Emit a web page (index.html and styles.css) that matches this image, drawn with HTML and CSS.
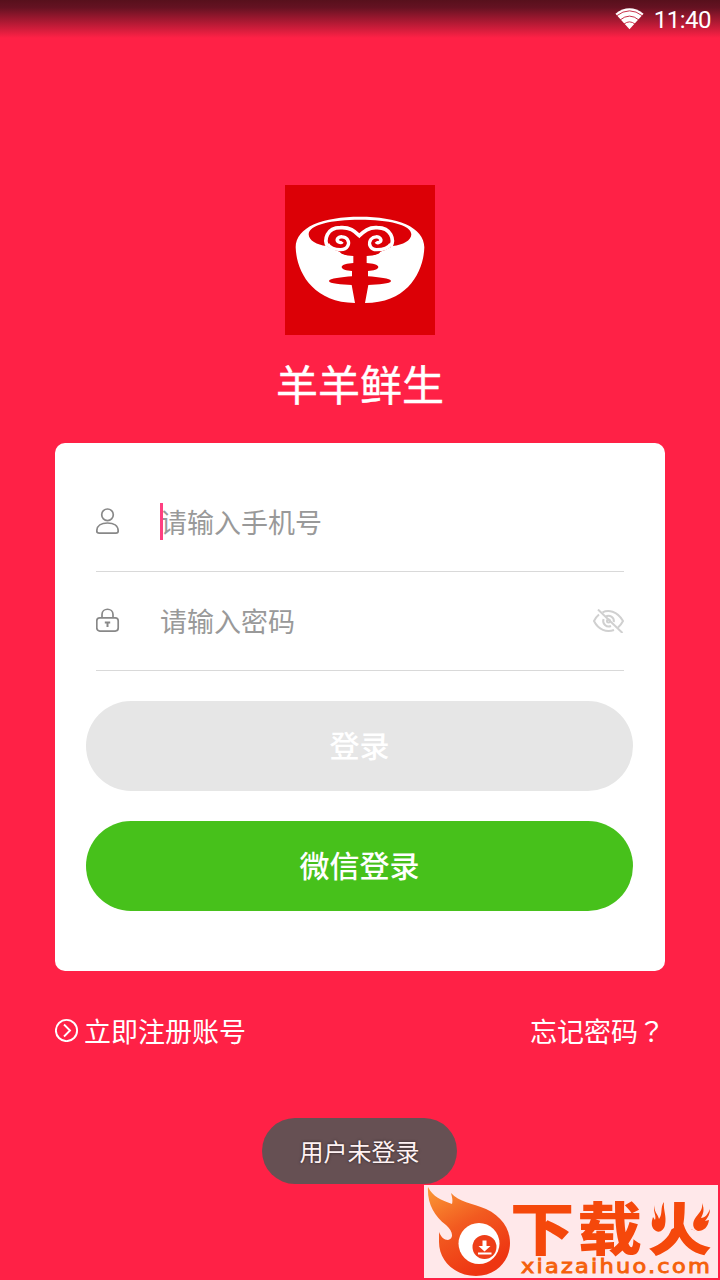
FILE: index.html
```html
<!DOCTYPE html>
<html lang="zh-CN">
<head>
  <meta charset="UTF-8">
  <title>羊羊鲜生</title>
  <link rel="stylesheet" href="styles.css">
</head>
<body>
  <div class="status-bar">
    <svg class="wifi" viewBox="42 18 90 72">
      <path d="M87 88 L43 39 Q87 5 131 39 Z" fill="#fff"/>
      <path d="M46 46 Q87 14 128 46 M57 59 Q87 34 117 59 M69 72 Q87 57 105 72" fill="none" stroke="#c11a35" stroke-width="2.8"/>
    </svg>
    <span>11:40</span>
  </div>

  <svg class="logo" viewBox="15 15 450 450">
    <rect x="15" y="15" width="450" height="450" fill="#dc0006"/>
    <path d="M47 202 C47 140 130 110 240 110 C350 110 433 140 433 202 C431 272 386 369 255 369 L265 315 C295 314 333 311 333 303 C333 296 294 291 264 289 L264 273 C281 272 295 268 295 261 C295 254 278 250 260 249 L260 228 C276 227 298 224 301 215 L318 209 L338 198 C369 195 394 182 394 163 C394 134 325 119 240 119 C155 119 86 134 86 163 C86 182 111 195 139 198 L162 209 L179 215 C184 224 203 227 220 228 L220 249 C202 250 185 254 185 261 C185 268 199 272 216 273 L216 289 C186 291 147 296 147 303 C147 311 185 314 215 315 L225 369 C95 367 49 272 47 202 Z" fill="#fff"/>
    <path d="M143 200 C131 180 140 143 181 143 C211 141 224 154 238 167 C252 154 266 141 292 143 C334 143 344 180 332 200" fill="none" stroke="#fff" stroke-width="11"/>
    <path d="M187 185 C182 192 168 184 172 177 C178 168 194 168 202 178 C211 191 202 209 182 209 C164 209 148 202 143 192 M288 185 C293 192 307 184 302 177 C296 168 281 168 273 178 C263 191 271 209 290 209 C310 209 327 202 332 192" fill="none" stroke="#fff" stroke-width="10"/>
  </svg>
  <h1>羊羊鲜生</h1>

  <form class="card">
    <div class="field">
      <svg class="icon" viewBox="0 0 24 28" fill="none" stroke="#888" stroke-width="1.7">
        <circle cx="11.500" cy="6.800" r="5.800"/>
        <path d="M3.300 25.200 Q0.800 25.200 0.800 23 C0.800 17.700 5.500 15 11.500 15 C17.500 15 22.200 17.700 22.200 23 Q22.200 25.200 19.900 25.200 Z"/>
      </svg>
      <div class="input-wrap">
        <input type="tel" placeholder="请输入手机号">
        <span class="caret"></span>
      </div>
    </div>
    <div class="field">
      <svg class="icon" viewBox="0 0 24 28" fill="none" stroke="#888" stroke-width="1.7">
        <rect x="0.800" y="10.800" width="21.400" height="13.300" rx="3"/>
        <path d="M6 10.800 V7.500 C6 0.500 17 0.500 17 7.500 V10.800"/>
        <path d="M8.800 15.500 H14.200 M11.500 15 V20" stroke-width="2"/>
      </svg>
      <div class="input-wrap">
        <input type="password" placeholder="请输入密码">
      </div>
      <svg class="eye" viewBox="0 0 32 24" fill="none" stroke="#d0d0d0" stroke-width="2">
        <path d="M10.500 3.300 C16 0.700 25 1.500 31 12 Q29 16 26 18.500 M7 5.500 Q4 8 2 12 C6.500 21 14.500 23.500 22 21"/>
        <path d="M13.500 7.800 C17.500 5 22.500 8.500 21.800 13 M11.500 10 C10 14.500 14.500 19 19 17"/>
        <circle cx="16.500" cy="12" r="1.500"/>
        <path d="M6 0.500 L30.500 24"/>
      </svg>
    </div>
    <button class="btn" type="submit" disabled>登录</button>
    <button class="btn wechat" type="button">微信登录</button>
  </form>

  <div class="links">
    <a href="#">
      <svg class="arrow" viewBox="0 0 24 24" fill="none" stroke="#fff" stroke-width="1.900">
        <circle cx="11.500" cy="12.500" r="10.600"/>
        <path d="M9 6.500 L15 12.500 L9 18.500"/>
      </svg>
      立即注册账号
    </a>
    <a href="#">忘记密码<span class="mark-end">？</span></a>
  </div>

  <div class="toast">用户未登录</div>

  <svg class="watermark" viewBox="0 0 294 93">
    <defs>
      <linearGradient id="fire" x1="0" y1="0" x2="0.500" y2="1">
        <stop offset="0" stop-color="#fb9a35"/>
        <stop offset="0.500" stop-color="#f25a20"/>
        <stop offset="1" stop-color="#ee3512"/>
      </linearGradient>
    </defs>
    <rect width="294" height="93" fill="#ffe8ea"/>
    <path d="M4 2 C9 12 17 15 28 19 C29 15 28 12 27 8 C35 17 48 18 62 24 C77 31 86 43 86 58 C86 77 71 91 52 91 C31 91 15 76 15 57 L15 47 C17 52 20 55 24 55 C31 53 28 45 22 40 C10 31 3 18 4 2 Z" fill="url(#fire)"/>
    <circle cx="55" cy="58.500" r="20.500" fill="#fff"/>
    <circle cx="60.500" cy="62" r="12" fill="#ee3e18"/>
    <path d="M58.500 55.500 H62.500 V61 H66.500 L60.500 66.500 L54.500 61 H58.500 Z M54 67.500 H67.500 V69.500 H54 Z" fill="#fff"/>
    <text class="mark" transform="translate(86 65) scale(1.130 1)">下</text>
    <text class="mark" transform="translate(153.500 65) scale(1.130 1)">载</text>
    <text class="mark" transform="translate(223.500 65) scale(1.130 1)">火</text>
    <!-- flames in place of the two dots of the last character -->
    <path d="M224 15 H250 V43 L240 48 H224 Z M265 15 H291 V48 H275 L265 43 Z" fill="#ffe8ea"/>
    <path d="M231 20 C229 26 234 29 235 34 C239 29 236 22 240 17 C239 25 243 31 241 40 C240 45 236 48 232 46 C227 43 227 38 229 32 L231 35 C233 30 228 26 231 20 Z M278 18 C281 25 279 29 277 33 C281 33 284 29 286 24 C286 29 284 32 281 36 L285 35 C284 42 280 46 274 46 C268 44 268 37 272 32 C276 27 279 24 278 18 Z" fill="#f5480b"/>
    <text class="domain" x="97" y="88" textLength="191" lengthAdjust="spacingAndGlyphs">xiazaihuo.com</text>
  </svg>
</body>
</html>
```
FILE: styles.css
```css
* {
  box-sizing: border-box;
}
body {
  margin: 0;
  height: 1280px;
  position: relative;
  overflow: hidden;
  background-color: #ff2146;
  font-family: "Noto Sans CJK SC", sans-serif;
  color: #fff;
}
.status-bar {
  height: 38px;
  padding: 1px 9px 0 0;
  display: flex;
  justify-content: flex-end;
  align-items: center;
  background: linear-gradient(#57101c, #651222 20%, #ff2146);
  font-family: Roboto, sans-serif;
  font-size: 24px;
  letter-spacing: -0.5px;
}
.wifi {
  width: 29px;
  height: 23px;
  margin: 0 10px 2px 0;
}
.logo {
  display: block;
  width: 150px;
  height: 150px;
  margin: 147px auto 0;
}
h1 {
  margin: 18px 0 30px;
  font-size: 42px;
  font-weight: 400;
  line-height: 60px;
  text-align: center;
  -webkit-text-stroke: 0.4px #fff;
}
.card {
  width: 610px;
  height: 528px;
  margin: 0 auto;
  padding: 30px 32px 60px 31px;
  background: white;
  border-radius: 10px;
}
.field {
  display: flex;
  align-items: center;
  height: 99px;
  margin: 0 9px 0 10px;
  border-bottom: 1px solid #d9d9d9;
}
.icon {
  width: 24px;
  height: 28px;
}
.input-wrap {
  flex: 1;
  position: relative;
  margin-left: 40px;
}
input {
  display: block;
  width: 100%;
  height: 40px;
  padding: 0 0 2px;
  border: none;
  outline: none;
  font-family: inherit;
  font-size: 27px;
}
input::placeholder {
  color: #999;
}
.caret {
  position: absolute;
  left: 0;
  top: 1px;
  width: 3px;
  height: 37px;
  background-color: #ff4081;
}
.eye {
  width: 32px;
  height: 24px;
}
.btn {
  display: block;
  width: 100%;
  height: 90px;
  margin-top: 30px;
  padding: 0 0 4px;
  border: none;
  border-radius: 45px;
  background-color: #e6e6e6;
  color: #fff;
  font-family: inherit;
  font-size: 30px;
  font-weight: 500;
}
.wechat {
  background-color: #47c11b;
}
.links {
  display: flex;
  justify-content: space-between;
  margin: 39px 55px 0;
}
.links a {
  display: flex;
  align-items: center;
  height: 40px;
  color: #fff;
  font-size: 27px;
  text-decoration: none;
}
.arrow {
  width: 24px;
  height: 24px;
  margin-right: 5px;
}
.mark-end {
  font-family: "Noto Sans CJK TC", sans-serif;
}
.toast {
  position: absolute;
  left: 262px;
  top: 1118px;
  width: 195px;
  height: 66px;
  border-radius: 33px;
  background-color: #665053;
  color: #fff2f3;
  font-size: 24px;
  line-height: 66px;
  text-align: center;
  text-shadow: 0 0 3px rgba(0,0,0,0.6);
}
.watermark {
  position: absolute;
  left: 424px;
  top: 1185px;
  width: 294px;
  height: 93px;
}
.mark {
  font-size: 57px;
  font-weight: 900;
  fill: #f5480b;
}
.domain {
  font-family: "DejaVu Sans", sans-serif;
  font-size: 20px;
  letter-spacing: 2px;
  fill: #f5600b;
  stroke: #f5600b;
  stroke-width: 0.9px;
}
```
